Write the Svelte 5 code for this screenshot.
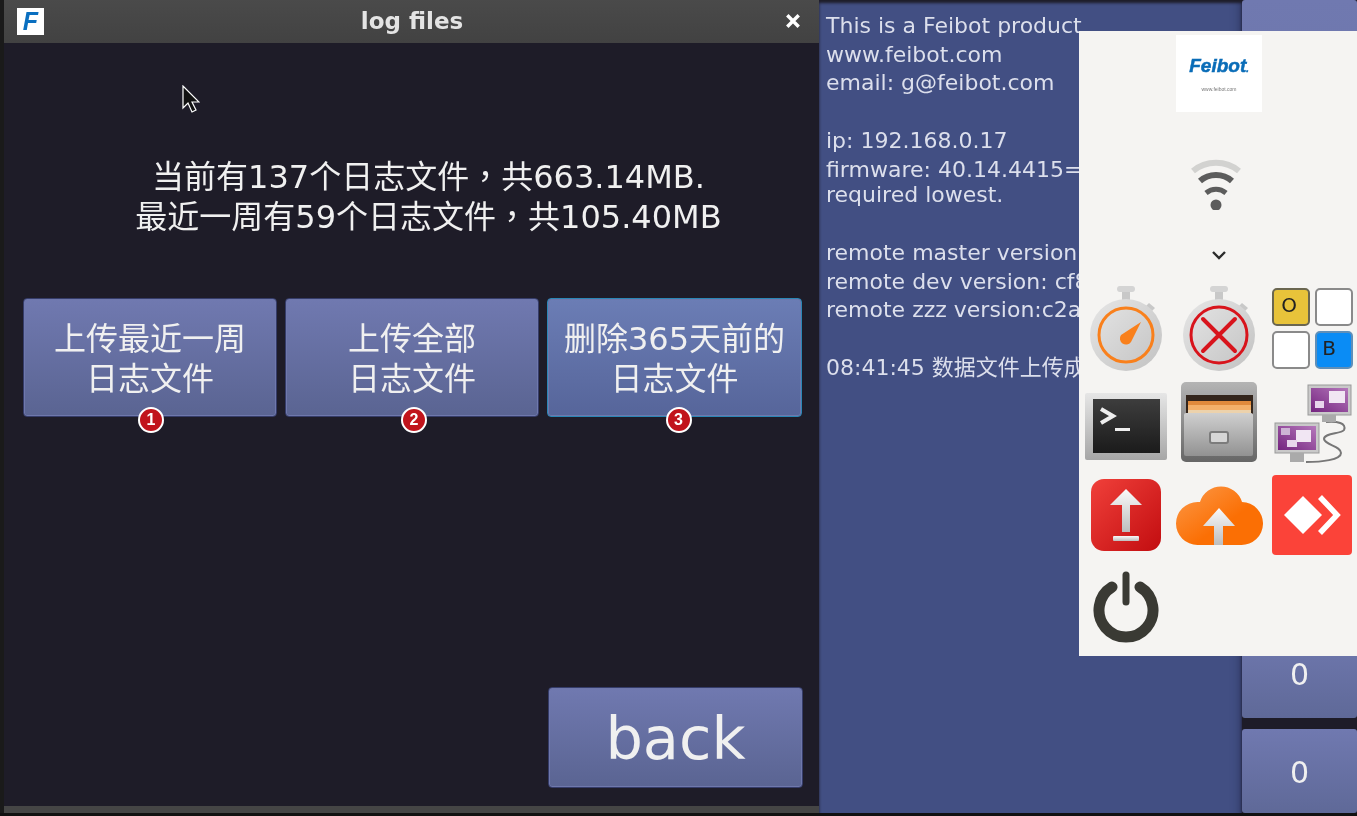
<script>
  const infoTop = ['This is a Feibot product', 'www.feibot.com', 'email: g@feibot.com'];
  const infoVer = ['remote master version', 'remote dev version: cf8', 'remote zzz version:c2a'];
  const uploads = [
    { lines: ['上传最近一周', '日志文件'], mark: 1, shift: 1 },
    { lines: ['上传全部', '日志文件'], mark: 2, shift: 2 },
    { lines: ['删除365天前的', '日志文件'], mark: 3, shift: 4, focus: true }
  ];
</script>

<div class="screen">
  <section class="window">
    <header class="titlebar">
      <span class="app-icon">F</span>
      <span class="title">log files</span>
      <svg class="close" viewBox="0 0 14 14" width="16" height="16"><path d="M2 2 12 12M12 2 2 12" stroke="#fff" stroke-width="3" /></svg>
    </header>
    <div class="content">
      <svg class="cursor" viewBox="0 0 18 30" width="18" height="30">
        <path d="M1 1v22l5-5 4 9 4-2-4-8h7z" fill="#111" stroke="#fff" stroke-width="1.2" />
      </svg>
      <p class="summary">当前有137个日志文件<span class="tc">，</span>共663.14MB.<br />最近一周有59个日志文件<span class="tc">，</span>共105.40MB</p>
      <div class="actions">
        {#each uploads as item}
          <button class="btn" class:focus={item.focus}>
            {item.lines[0]}<br />{item.lines[1]}
            <span class="mark" style="margin-left: {item.shift - 13}px">{item.mark}</span>
          </button>
        {/each}
      </div>
      <div class="back-row">
        <button class="btn back">back</button>
      </div>
    </div>
    <div class="bottom-edge"></div>
  </section>

  <section class="info">
    <div class="info-text">
      {#each infoTop as line}<div>{line}</div>{/each}
      <div class="gap"></div>
      <div>ip: 192.168.0.17</div>
      <div>firmware: 40.14.4415=</div>
      <div class="tight">required lowest.</div>
      <div class="gap"></div>
      {#each infoVer as line}<div>{line}</div>{/each}
      <div class="gap"></div>
      <div>08:41:45 数据文件上传成功</div>
    </div>
  </section>

  <aside class="side">
    <div class="tile"></div>
    <div class="tile num upper">0</div>
    <div class="tile num lower">0</div>
  </aside>

  <nav class="menu">
    <div class="logo">
      <span class="logo-name">Feibot<small>.</small></span>
      <span class="logo-url">www.feibot.com</span>
    </div>
    <svg class="wifi" viewBox="0 0 52 52" width="52" height="52">
      <path d="M3 13C16 2 36 2 49 13" fill="none" stroke="#d2d2d0" stroke-width="6" />
      <path d="M10 23C19 15 33 15 42 23" fill="none" stroke="#5c5c5c" stroke-width="6" />
      <path d="M16 35C22 30 30 30 36 35" fill="none" stroke="#5c5c5c" stroke-width="5" />
      <circle cx="26" cy="47" r="5.5" fill="#5c5c5c" />
    </svg>
    <svg class="chevron" viewBox="0 0 16 10" width="16" height="10"><path d="M2 2 8 8 14 2" fill="none" stroke="#2b2b2b" stroke-width="2.4" /></svg>

    <div class="icons">
      <svg viewBox="0 0 80 90" width="80" height="90">
        <defs>
          <linearGradient id="dial" x1="0" y1="0" x2="1" y2="1"><stop offset="0" stop-color="#e6e6e6" /><stop offset="1" stop-color="#c2c2c2" /></linearGradient>
          <linearGradient id="red" x1="0" y1="0" x2="1" y2="1"><stop offset="0" stop-color="#f0403a" /><stop offset="1" stop-color="#c20d10" /></linearGradient>
          <linearGradient id="silver" x1="0" y1="0" x2="0" y2="1"><stop offset="0" stop-color="#fafafa" /><stop offset="1" stop-color="#bdbdbd" /></linearGradient>
          <linearGradient id="orange" x1="0" y1="0" x2="1" y2="1"><stop offset="0" stop-color="#fc9a4a" /><stop offset="0.6" stop-color="#fb6f04" /></linearGradient>
          <linearGradient id="purple" x1="1" y1="0" x2="0" y2="1"><stop offset="0" stop-color="#b578bb" /><stop offset="1" stop-color="#74247f" /></linearGradient>
          <linearGradient id="term" x1="0" y1="0" x2="0" y2="1"><stop offset="0" stop-color="#3d3d3d" /><stop offset="1" stop-color="#1b1b1b" /></linearGradient>
          <linearGradient id="frame" x1="0" y1="0" x2="0" y2="1"><stop offset="0" stop-color="#e6e6e6" /><stop offset="1" stop-color="#a6a6a6" /></linearGradient>
          <linearGradient id="cab" x1="0" y1="0" x2="0" y2="1"><stop offset="0" stop-color="#b4b4b4" /><stop offset="1" stop-color="#666" /></linearGradient>
          <linearGradient id="face" x1="0" y1="0" x2="0" y2="1"><stop offset="0" stop-color="#cfcfcf" /><stop offset="1" stop-color="#929292" /></linearGradient>
        </defs>
        <rect x="36" y="8" width="8" height="10" fill="#c8c8c8" /><rect x="31" y="3" width="18" height="6" rx="3" fill="#d4d4d4" />
        <path d="m63 20 6 5-5 5-6-5z" fill="#c8c8c8" />
        <circle cx="40" cy="52" r="36" fill="url(#dial)" />
        <circle cx="40" cy="52" r="27" fill="none" stroke="#f9801c" stroke-width="3" />
        <path d="M55 39 45 59a6 6 0 0 1-10-7z" fill="#f9801c" />
      </svg>
      <svg viewBox="0 0 80 90" width="80" height="90">
        <rect x="36" y="8" width="8" height="10" fill="#c8c8c8" /><rect x="31" y="3" width="18" height="6" rx="3" fill="#d4d4d4" />
        <path d="m63 20 6 5-5 5-6-5z" fill="#c8c8c8" />
        <circle cx="40" cy="52" r="36" fill="url(#dial)" />
        <circle cx="40" cy="52" r="28" fill="none" stroke="#d8141c" stroke-width="3" />
        <path d="M24 36 56 68M56 36 24 68" stroke="#d8141c" stroke-width="4" stroke-linecap="round" />
      </svg>
      <div class="keys">
        <span class="key yellow">O</span><span class="key"></span>
        <span class="key"></span><span class="key blue">B</span>
      </div>

      <svg viewBox="0 0 84 76" width="84" height="76">
        <rect x="1" y="8" width="82" height="67" rx="2" fill="url(#frame)" />
        <rect x="9" y="14" width="67" height="54" fill="url(#term)" />
        <path d="M17 24 29 31 17 38" fill="none" stroke="#eee" stroke-width="4" />
        <rect x="31" y="43" width="15" height="3" fill="#eee" />
      </svg>
      <svg viewBox="0 0 80 84" width="80" height="84">
        <rect x="2" y="1" width="76" height="80" rx="5" fill="url(#cab)" />
        <rect x="7" y="14" width="67" height="19" fill="#33251c" />
        <rect x="9" y="20" width="63" height="4" fill="#e08a3c" /><rect x="9" y="24" width="63" height="5" fill="#f3b06a" /><rect x="9" y="29" width="63" height="4" fill="#ecd2ac" />
        <rect x="5" y="32" width="69" height="43" rx="2" fill="url(#face)" />
        <rect x="31" y="51" width="18" height="11" rx="2" fill="#d6d6d6" stroke="#7c7c7c" stroke-width="2" />
      </svg>
      <svg viewBox="0 0 82 84" width="82" height="84">
        <path d="M55 41C66 40 76 42 73 49 70 53 53 52 53 58 54 64 70 65 70 72 70 79 50 81 35 81" fill="none" stroke="#777" stroke-width="2" />
        <rect x="37" y="4" width="43" height="30" fill="#c9c9c9" stroke="#999" />
        <rect x="40" y="7" width="37" height="24" fill="url(#purple)" /><rect x="58" y="10" width="16" height="12" fill="#f1e6f3" /><rect x="44" y="20" width="9" height="7" fill="#e8d5ec" />
        <rect x="51" y="34" width="14" height="7" fill="#aaa" />
        <rect x="4" y="42" width="44" height="30" fill="#c9c9c9" stroke="#999" />
        <rect x="7" y="45" width="38" height="24" fill="url(#purple)" /><rect x="25" y="49" width="15" height="12" fill="#f1e6f3" /><rect x="10" y="47" width="9" height="7" fill="#cdb3d4" /><rect x="16" y="59" width="10" height="7" fill="#e8d5ec" />
        <rect x="19" y="72" width="14" height="9" fill="#aaa" />
      </svg>

      <svg viewBox="0 0 72 72" width="72" height="72">
        <rect x="1" y="0" width="70" height="72" rx="13" fill="url(#red)" />
        <path d="M36 10 52 26H40V53H32V26H20z" fill="url(#silver)" />
        <rect x="23" y="57" width="26" height="5" rx="1" fill="url(#silver)" />
      </svg>
      <svg viewBox="0 0 88 68" width="88" height="68">
        <path d="M22.5 64A21.5 21.5 0 0 1 22.5 21H25A22 22 0 0 1 67 21A21.5 21.5 0 0 1 66 64Z" fill="url(#orange)" />
        <path d="M44 27 60 45H48V64H39V45H28z" fill="url(#silver)" />
      </svg>
      <svg viewBox="0 0 80 80" width="80" height="80">
        <rect width="80" height="80" rx="4" fill="#fb4339" />
        <path d="M31 21 50 40 31 59 12 40z" fill="#fff" />
        <path d="M48 22 65 40 48 58" fill="none" stroke="#fff" stroke-width="5.5" />
      </svg>

      <svg viewBox="0 0 68 72" width="68" height="72">
        <path d="M20 16A27 27 0 1 0 48 16" fill="none" stroke="#3a3a34" stroke-width="11" stroke-linecap="round" />
        <path d="M34 4V31" stroke="#3a3a34" stroke-width="7" stroke-linecap="round" />
      </svg>
    </div>
  </nav>
</div>

<style>
  :global(body) { margin: 0; background: #111; }
  .screen { position: relative; width: 1357px; height: 816px; display: flex; overflow: hidden; font-family: "DejaVu Sans", "Noto Sans CJK SC", sans-serif; color: #fff; filter: blur(0.4px); }

  .window { width: 819px; height: 813px; flex: none; box-sizing: border-box; border-left: 4px solid #1a1a1a; display: flex; flex-direction: column; background: #1e1c28; }
  .titlebar { height: 43px; flex: none; box-sizing: border-box; background: linear-gradient(#4a4a4a, #424242); display: flex; align-items: center; padding: 0 18px 2px 13px; }
  .app-icon { width: 27px; height: 27px; margin-top: 2px; background: #fff; color: #0a6fc0; font: italic bold 25px/27px "Liberation Sans", sans-serif; text-align: center; }
  .title { flex: 1; margin-right: 5px; text-align: center; font-size: 23px; font-weight: bold; color: #e4e4e4; }
  .content { position: relative; flex: 1; display: flex; flex-direction: column; padding: 0 16px 18px 19px; }
  .cursor { position: absolute; left: 178px; top: 42px; }
  .summary { margin: 114px 0 0; height: 80px; padding-left: 31px; font-size: 32px; line-height: 40px; text-align: center; color: #f0f0f0; white-space: nowrap; }
  .tc { font-family: "Noto Sans CJK TC", sans-serif; line-height: 0; }
  .actions { margin-top: 61px; display: grid; grid-template-columns: 254px 254px 255px; gap: 8px; }
  .btn { position: relative; box-sizing: border-box; height: 119px; padding: 2px 0 0; border: 1px solid #353c69; border-radius: 4px; background: linear-gradient(#7079b0, #5a6492); box-shadow: inset 0 0 0 1px #6f78ac; color: #f0f0f0; font-family: inherit; font-size: 32px; line-height: 40px; }
  .btn.focus { border-color: #2a86b5; background: linear-gradient(#6b7db5, #56659a); }
  .mark { position: absolute; left: 50%; bottom: -17px; width: 22px; height: 22px; border: 2px solid #fff; border-radius: 50%; background: #c1141c; font: bold 16px/22px "Liberation Sans", sans-serif; color: #fff; }
  .back-row { margin-top: auto; display: flex; justify-content: flex-end; }
  .back { width: 255px; height: 101px; font-size: 59px; line-height: 1; }
  .bottom-edge { height: 7px; flex: none; background: #454545; }

  .info { width: 423px; height: 813px; flex: none; box-sizing: border-box; padding: 12px 0 0 7px; background: #424f83; font-size: 22px; line-height: 28.5px; color: #dcdfec; white-space: nowrap; overflow: hidden; box-shadow: inset 0 3px 3px #1e1c28, inset -12px 0 10px -10px #2e3763; }
  .gap { height: 29.5px; }
  .tight { margin-top: -3px; }

  .side { width: 115px; height: 813px; flex: none; display: flex; flex-direction: column; gap: 11px; background: #1e1c28; }
  .tile { flex: 1; border-radius: 3px; background: linear-gradient(#7079b0, #5f6998); }
  .num { flex: none; display: flex; align-items: center; justify-content: center; font-size: 30px; color: #f0f0f0; }
  .upper { height: 87px; }
  .lower { height: 84px; padding-top: 3px; box-sizing: border-box; }

  .menu { position: absolute; left: 1079px; top: 31px; width: 278px; height: 625px; box-sizing: border-box; background: #f5f4f2; display: flex; flex-direction: column; align-items: center; }
  .logo { margin-top: 4px; margin-left: 2px; width: 86px; height: 77px; flex: none; background: #fff; display: flex; flex-direction: column; align-items: center; }
  .logo-name { margin-top: 19px; font: italic 900 19px/24px "Liberation Sans", sans-serif; -webkit-text-stroke: 0.5px #0a6db8; color: #0a6db8; }
  .logo-name small { font-size: 9px; }
  .logo-url { margin-top: 5px; font: 5px/7px "Liberation Sans", sans-serif; color: #777; }
  .wifi { margin-top: 46px; margin-left: -4px; flex: none; }
  .chevron { margin-top: 40px; margin-left: 2px; flex: none; }
  .icons { margin-top: 22px; width: 100%; display: grid; grid-template-columns: 94px 92px 92px; grid-template-rows: 92px 98px 86px 98px; place-items: center; }
  .icons > :nth-child(3n) { margin-left: 2px; }
  .keys { display: grid; grid-template-columns: 38px 38px; grid-auto-rows: 38px; gap: 5px; }
  .key { box-sizing: border-box; border: 2px solid #8a8a8a; border-radius: 5px; background: #fff; color: #222; font-size: 20px; line-height: 30px; text-align: center; }
  .yellow { background: #e8c33a; border-color: #6a6650; padding-right: 3px; }
  .blue { background: #0a8cf5; border-color: #5f8fb8; padding-right: 9px; }
</style>
